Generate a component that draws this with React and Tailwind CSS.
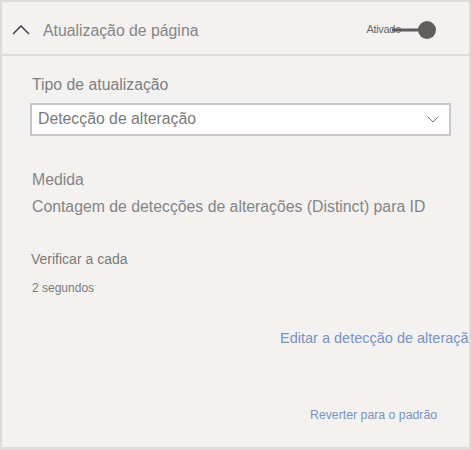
import { useState } from 'react'

export default function App() {
  const [on] = useState(true)

  return (
    <div className="w-[471px] h-[450px] bg-[#f3f2f1] overflow-hidden" style={{ fontFamily: '"Liberation Sans", Arial, sans-serif' }}>
      <div className="h-full border-t-2 border-l-2 border-r-2 border-b-[3px] border-[#dddcdb] flex flex-col overflow-hidden">
        {/* Header */}
        <div className="h-[54px] shrink-0 flex items-center border-b-2 border-[#dddcdb]">
          <svg width="18" height="10" viewBox="0 0 18 10" className="ml-[10px] mt-[4px]">
            <path d="M1 9 L9 1 L17 9" fill="none" stroke="#333" strokeWidth="1.3" />
          </svg>
          <span className="ml-[13px] mt-[5px] text-[15.8px] text-[#858585]">Atualização de página</span>
          <div className="ml-auto mr-[33px] mt-[3px] flex items-center relative">
            <span className="text-[11px] text-[#6a6a6a] tracking-[-0.3px]">Ativado</span>
            <div className="absolute left-[26px] top-1/2 -translate-y-1/2 w-[40px] h-[3px] bg-[#605e5c]" />
            <div className="relative ml-[17px] w-[18px] h-[18px] rounded-full bg-[#605e5c]" />
          </div>
        </div>

        {/* Content */}
        <div className="flex-1 flex flex-col pl-[28px] pr-[18px]">
          <div className="mt-[17px] ml-[2px] text-[15.8px] text-[#7e7e7e]">Tipo de atualização</div>
          <div className="mt-[6px] h-[33px] bg-white border-2 border-[#c8c8c8] flex items-center justify-between pl-[6px] pr-[10px]">
            <span className="text-[15.8px] text-[#7a7a7a]">Detecção de alteração</span>
            <svg width="12" height="7" viewBox="0 0 12 7">
              <path d="M0.5 0.5 L6 6 L11.5 0.5" fill="none" stroke="#777" strokeWidth="1" />
            </svg>
          </div>

          <div className="mt-[32px] ml-[2px] text-[15.8px] text-[#858585]">Medida</div>
          <div className="mt-[4px] ml-[2px] text-[15.8px] text-[#858585] whitespace-nowrap">Contagem de detecções de alterações (Distinct) para ID</div>

          <div className="mt-[30px] ml-[1px] text-[14px] text-[#7a7a7a]">Verificar a cada</div>
          <div className="mt-[9px] ml-[2px] text-[12px] text-[#7a7a7a]">{on ? '2 segundos' : ''}</div>

          <div className="mt-[31px] ml-[250px] text-[14.5px] text-[#7894c4] whitespace-nowrap">Editar a detecção de alteração</div>

          <div className="mt-[56px] ml-[280px] text-[12.3px] text-[#7894c4] whitespace-nowrap">Reverter para o padrão</div>
        </div>
      </div>
    </div>
  )
}
